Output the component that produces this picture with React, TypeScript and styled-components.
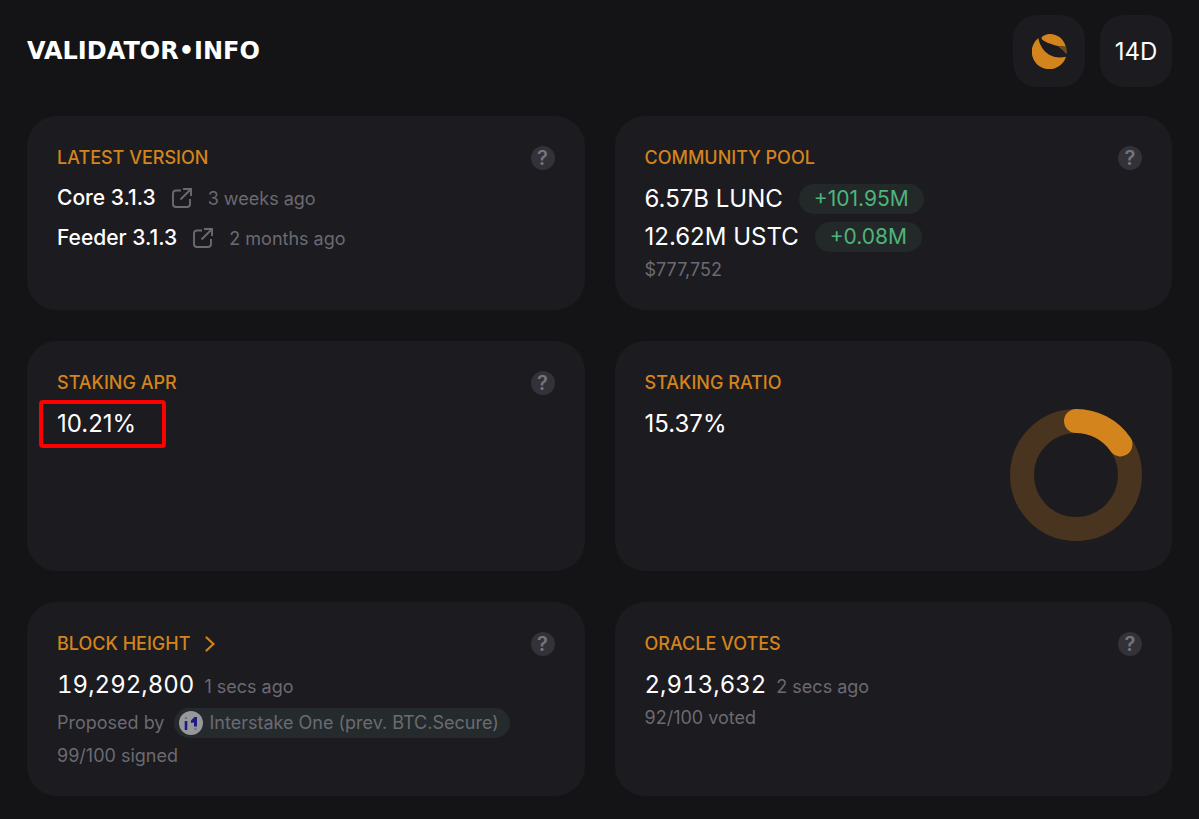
import React from "react";
import styled, { createGlobalStyle } from "styled-components";

const GlobalStyle = createGlobalStyle`
  *, *::before, *::after { box-sizing: border-box; }
  body {
    margin: 0;
    background: #141416;
    color: #ffffff;
    font-family: Inter, "Liberation Sans", sans-serif;
  }
  button { font: inherit; color: inherit; border: 0; padding: 0; cursor: pointer; }
  a { color: inherit; text-decoration: none; }
  h2, p { margin: 0; }
  svg { display: block; flex: none; }
`;

const Page = styled.div`
  padding: 15px 27px 23px;
`;

const Header = styled.header`
  display: flex;
  align-items: center;
  justify-content: space-between;
  margin-bottom: 29px;
`;

const Wordmark = styled.a`
  font-family: "DejaVu Sans", sans-serif;
  font-size: 24px;
  line-height: 24px;
  font-weight: 700;
`;

const Actions = styled.div`
  display: flex;
  gap: 15px;
`;

const SquareButton = styled.button`
  display: flex;
  align-items: center;
  justify-content: center;
  width: 72px;
  height: 72px;
  border-radius: 24px;
  background: #1c1b1f;
  font-size: 24px;
`;

const Grid = styled.main`
  display: grid;
  grid-template-columns: repeat(2, minmax(0, 1fr));
  gap: 31px 30px;
`;

const Card = styled.section`
  display: flex;
  justify-content: space-between;
  padding: 30px 30px 26px;
  border-radius: 30px;
  background: #1c1b1f;
`;

const Body = styled.div`
  flex: 1;
  min-width: 0;
`;

const CardHead = styled.div`
  display: flex;
  align-items: center;
  justify-content: space-between;
  height: 24px;
  margin-bottom: 10px;
`;

const Title = styled.h2`
  display: flex;
  align-items: center;
  gap: 15px;
  color: #d3841c;
  font-size: 18px;
  line-height: 24px;
  font-weight: 500;
`;

const HelpButton = styled.button`
  width: 24px;
  height: 24px;
  border-radius: 50%;
  background: #333238;
  color: #75747c;
  font-size: 20px;
  line-height: 24px;
  font-weight: 600;
`;

const Row = styled.div<{ $gap?: number; $center?: boolean }>`
  display: flex;
  align-items: ${(p) => (p.$center ? "center" : "baseline")};
  gap: ${(p) => p.$gap ?? 10}px;
  height: 38px;
  line-height: 38px;
`;

const Versions = styled.div`
  margin-top: -2px;
`;

const VersionRow = styled(Row)`
  height: 40px;
  line-height: 40px;
`;

const Version = styled.span`
  font-size: 21px;
  font-weight: 500;
`;

const IconLink = styled.a`
  align-self: center;
  color: #6b6a72;
`;

const Value = styled.span<{ $tabular?: boolean }>`
  font-size: 24px;
  font-variant-numeric: ${(p) => (p.$tabular ? "tabular-nums" : "normal")};
`;

const Muted = styled.span`
  color: #6b6a72;
  font-size: 18px;
`;

const Note = styled.p`
  color: #6b6a72;
  font-size: 18px;
  line-height: 28px;
`;

const Gain = styled.span`
  padding: 0 15px;
  border-radius: 15px;
  background: #232928;
  color: #4fb37c;
  font-size: 21px;
  line-height: 30px;
`;

const Marked = styled.div`
  position: relative;
  display: inline-block;
  height: 38px;
  line-height: 38px;
`;

const Highlight = styled.div`
  position: absolute;
  inset: -5px -30px -5px -18px;
  border: 4px solid #ff0000;
  border-radius: 4px;
`;

const ValidatorChip = styled.a`
  display: flex;
  align-items: center;
  gap: 6px;
  height: 30px;
  padding: 0 11px 0 5px;
  border-radius: 15px;
  background: #252a2c;
  color: #6b6a72;
  font-size: 18px;
`;

const Donut = styled.svg`
  align-self: flex-end;
  margin: 38px 0 4px;
`;

const CoinIcon = () => (
  <svg width="35" height="35" viewBox="0 0 105 105" aria-hidden="true">
    <path d="M19 12C24 42 50 80 102 68A52.5 52.5 0 1 1 19 12Z" fill="#d3841c" />
    <path d="M29 10C38 1 50 0 55 0C76 1 94 13 102 38L77 36C62 32 48 28 38 22C30 18 27 14 29 10Z" fill="#d3841c" />
    <path d="M76 35L102 38Q106 49 104 61Q92 47 76 35Z" fill="#6f4d22" />
  </svg>
);

const ExternalIcon = () => (
  <svg width="20" height="20" viewBox="0 0 20 20" fill="none" stroke="currentColor" strokeWidth="1.9" aria-hidden="true">
    <path d="M9 2.500H4Q1 2.500 1 5.500V16Q1 19 4 19H15Q18 19 18 16V11" />
    <path d="M8.500 11.500L18.500 1.500M11 1H19V8" />
  </svg>
);

const ChevronIcon = () => (
  <svg width="10" height="16" viewBox="0 0 10 16" fill="none" stroke="currentColor" strokeWidth="2.2" strokeLinecap="round" aria-hidden="true">
    <path d="M1.5 1.5L8.5 8L1.5 14.5" />
  </svg>
);

const AvatarIcon = () => (
  <svg width="24" height="24" viewBox="0 0 24 24" aria-hidden="true">
    <circle cx="12" cy="12" r="12" fill="#98979b" />
    <path d="M7 10V19" fill="none" stroke="#1d1a80" strokeWidth="2.6" />
    <path d="M12 12V9.500L15.500 6H18V15.500H15V11.500Z" fill="#1d1a80" />
    <circle cx="7" cy="7" r="1.3" fill="#77767f" />
    <circle cx="16.5" cy="18" r="1.3" fill="#77767f" />
  </svg>
);

const RatioDonut = ({ percent }: { percent: number }) => {
  const length = 2 * Math.PI * 54;
  return (
    <Donut width="132" height="132" viewBox="0 0 132 132" fill="none" strokeWidth="24" role="img" aria-label="Staking ratio chart">
      <circle cx="66" cy="66" r="54" stroke="#49341f" />
      <circle
        cx="66"
        cy="66"
        r="54"
        stroke="#d3841c"
        strokeLinecap="round"
        strokeDasharray={`${(length * percent) / 100} ${length}`}
        transform="rotate(-90 66 66)"
      />
    </Donut>
  );
};

const Head = ({ title, help = true, arrow }: { title: string; help?: boolean; arrow?: boolean }) => (
  <CardHead>
    <Title>
      {title}
      {arrow && (
        <a href="#blocks" aria-label="Open blocks">
          <ChevronIcon />
        </a>
      )}
    </Title>
    {help && <HelpButton type="button">?</HelpButton>}
  </CardHead>
);

const versions = [
  { name: "Core 3.1.3", age: "3 weeks ago" },
  { name: "Feeder 3.1.3", age: "2 months ago" },
];

const pool = [
  { amount: "6.57B LUNC", gain: "+101.95M" },
  { amount: "12.62M USTC", gain: "+0.08M" },
];

export default function App() {
  return (
    <Page>
      <GlobalStyle />
      <Header>
        <Wordmark href="#home">VALIDATOR•INFO</Wordmark>
        <Actions>
          <SquareButton type="button" aria-label="Select chain">
            <CoinIcon />
          </SquareButton>
          <SquareButton type="button">14D</SquareButton>
        </Actions>
      </Header>
      <Grid>
        <Card>
          <Body>
            <Head title="LATEST VERSION" />
            <Versions>
              {versions.map((v) => (
                <VersionRow key={v.name} $gap={16}>
                  <Version>{v.name}</Version>
                  <IconLink href="#release" aria-label={`${v.name} release`}>
                    <ExternalIcon />
                  </IconLink>
                  <Muted>{v.age}</Muted>
                </VersionRow>
              ))}
            </Versions>
          </Body>
        </Card>
        <Card>
          <Body>
            <Head title="COMMUNITY POOL" />
            {pool.map((p) => (
              <Row key={p.amount} $gap={16} $center>
                <Value>{p.amount}</Value>
                <Gain>{p.gain}</Gain>
              </Row>
            ))}
            <Note>$777,752</Note>
          </Body>
        </Card>
        <Card>
          <Body>
            <Head title="STAKING APR" />
            <Marked>
              <Value>10.21%</Value>
              <Highlight />
            </Marked>
          </Body>
        </Card>
        <Card>
          <Body>
            <Head title="STAKING RATIO" help={false} />
            <Row>
              <Value>15.37%</Value>
            </Row>
          </Body>
          <RatioDonut percent={15.37} />
        </Card>
        <Card>
          <Body>
            <Head title="BLOCK HEIGHT" arrow />
            <Row>
              <Value $tabular>19,292,800</Value>
              <Muted>1 secs ago</Muted>
            </Row>
            <Row $center>
              <Muted>Proposed by</Muted>
              <ValidatorChip href="#validator">
                <AvatarIcon />
                Interstake One (prev. BTC.Secure)
              </ValidatorChip>
            </Row>
            <Note>99/100 signed</Note>
          </Body>
        </Card>
        <Card>
          <Body>
            <Head title="ORACLE VOTES" />
            <Row>
              <Value $tabular>2,913,632</Value>
              <Muted>2 secs ago</Muted>
            </Row>
            <Note>92/100 voted</Note>
          </Body>
        </Card>
      </Grid>
    </Page>
  );
}
